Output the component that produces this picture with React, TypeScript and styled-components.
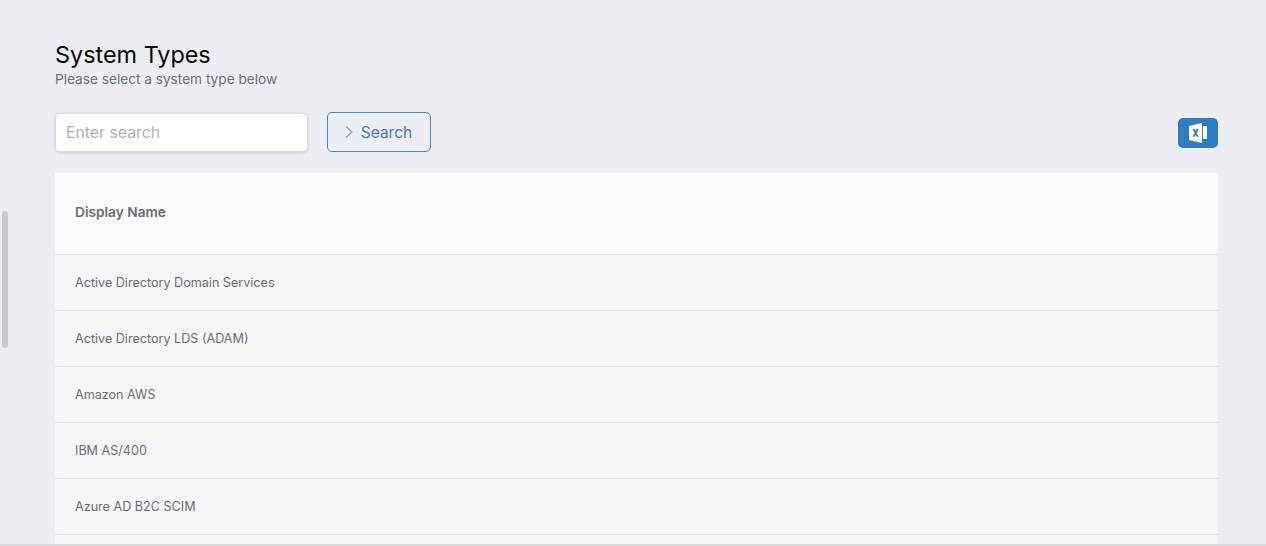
import React from "react";
import styled, { createGlobalStyle } from "styled-components";

const Global = createGlobalStyle`
  html, body { margin: 0; padding: 0; height: 546px; overflow: hidden; background: #edeef4; }
  * { box-sizing: border-box; }
  body { font-family: "Inter", "Noto Sans", sans-serif; }
`;

const Viewport = styled.div`
  position: relative;
  height: 546px;
  overflow: hidden;
  border-bottom: 2px solid #d9dadd;
`;

const ScrollThumb = styled.div`
  position: absolute;
  left: 2px;
  top: 211px;
  width: 6px;
  height: 137px;
  border-radius: 3px;
  background: #c6c7cb;
`;

const Page = styled.main`
  padding: 42px 48px 0 55px;
  display: flex;
  flex-direction: column;
`;

const Title = styled.h1`
  margin: 0;
  font-size: 23.4px;
  line-height: 26px;
  font-weight: 400;
  color: #08080a;
`;

const Subtitle = styled.p`
  margin: 3px 0 0;
  font-size: 13.65px;
  line-height: 16px;
  color: #6e6e76;
`;

const Toolbar = styled.div`
  margin-top: 25px;
  height: 40px;
  display: flex;
  align-items: center;
  gap: 19px;
`;

const SearchInput = styled.input`
  width: 253px;
  height: 39px;
  padding: 0 10px;
  border: 1px solid #d9d9df;
  border-radius: 5px;
  background: #fff;
  box-shadow: 0 1px 3px rgba(60, 60, 80, 0.2);
  font: 400 15.8px "Inter", sans-serif;
  color: #444;
  outline: none;
  &::placeholder { color: #b0b0b4; opacity: 1; }
`;

const SearchButton = styled.button`
  width: 104px;
  height: 40px;
  display: flex;
  align-items: center;
  justify-content: center;
  gap: 7px;
  padding: 0 2px 0 0;
  border: 1px solid #4a86bb;
  border-radius: 5px;
  background: transparent;
  color: #4a7fae;
  font: 400 15.5px "Inter", sans-serif;
`;

const ExportButton = styled.button`
  margin-left: auto;
  margin-top: 2px;
  width: 40px;
  height: 30px;
  display: flex;
  align-items: center;
  justify-content: center;
  padding: 0;
  border: 0;
  border-radius: 5px;
  background: #2f7cc1;
`;

const Table = styled.div`
  margin-top: 21px;
  display: flex;
  flex-direction: column;
  background: #f6f6fb;
`;

const HeaderRow = styled.div`
  height: 82px;
  display: flex;
  align-items: center;
  padding: 0 20px 4px;
  background: #fbfaff;
  border-bottom: 1px solid #dedee3;
  font-size: 13.7px;
  font-weight: 600;
  color: #6c6c72;
`;

const Row = styled.div`
  height: 56px;
  flex: none;
  display: flex;
  align-items: center;
  padding: 0 20px;
  border-bottom: 1px solid #dedee3;
  font-size: 12.6px;
  color: #6e6e74;
`;

const rows = [
  "Active Directory Domain Services",
  "Active Directory LDS (ADAM)",
  "Amazon AWS",
  "IBM AS/400",
  "Azure AD B2C SCIM",
  "",
];

export default function App() {
  return (
    <Viewport>
      <Global />
      <ScrollThumb />
      <Page>
        <Title>System Types</Title>
        <Subtitle>Please select a system type below</Subtitle>
        <Toolbar>
          <SearchInput placeholder="Enter search" />
          <SearchButton>
            <svg width="10" height="14" viewBox="0 0 10 14" fill="none" stroke="#6b97bf" strokeWidth="1.1">
              <path d="M2 1.5 L8 7 L2 12.5" />
            </svg>
            Search
          </SearchButton>
          <ExportButton aria-label="Export to Excel">
            <svg width="18" height="20" viewBox="0 0 18 20">
              <path d="M0 3 L13 0 V20 L0 17 Z" fill="#fff" />
              <path d="M14 3 H18 V16 H14 Z" fill="#fff" />
              <path d="M3.6 6 H5.6 L6.7 8.3 L7.8 6 H9.7 L7.7 9.9 L9.8 13.8 H7.8 L6.7 11.5 L5.6 13.8 H3.5 L5.7 9.9 Z" fill="#3f77aa" />
            </svg>
          </ExportButton>
        </Toolbar>
        <Table>
          <HeaderRow>Display Name</HeaderRow>
          {rows.map((r, i) => (
            <Row key={i}>{r}</Row>
          ))}
        </Table>
      </Page>
    </Viewport>
  );
}
